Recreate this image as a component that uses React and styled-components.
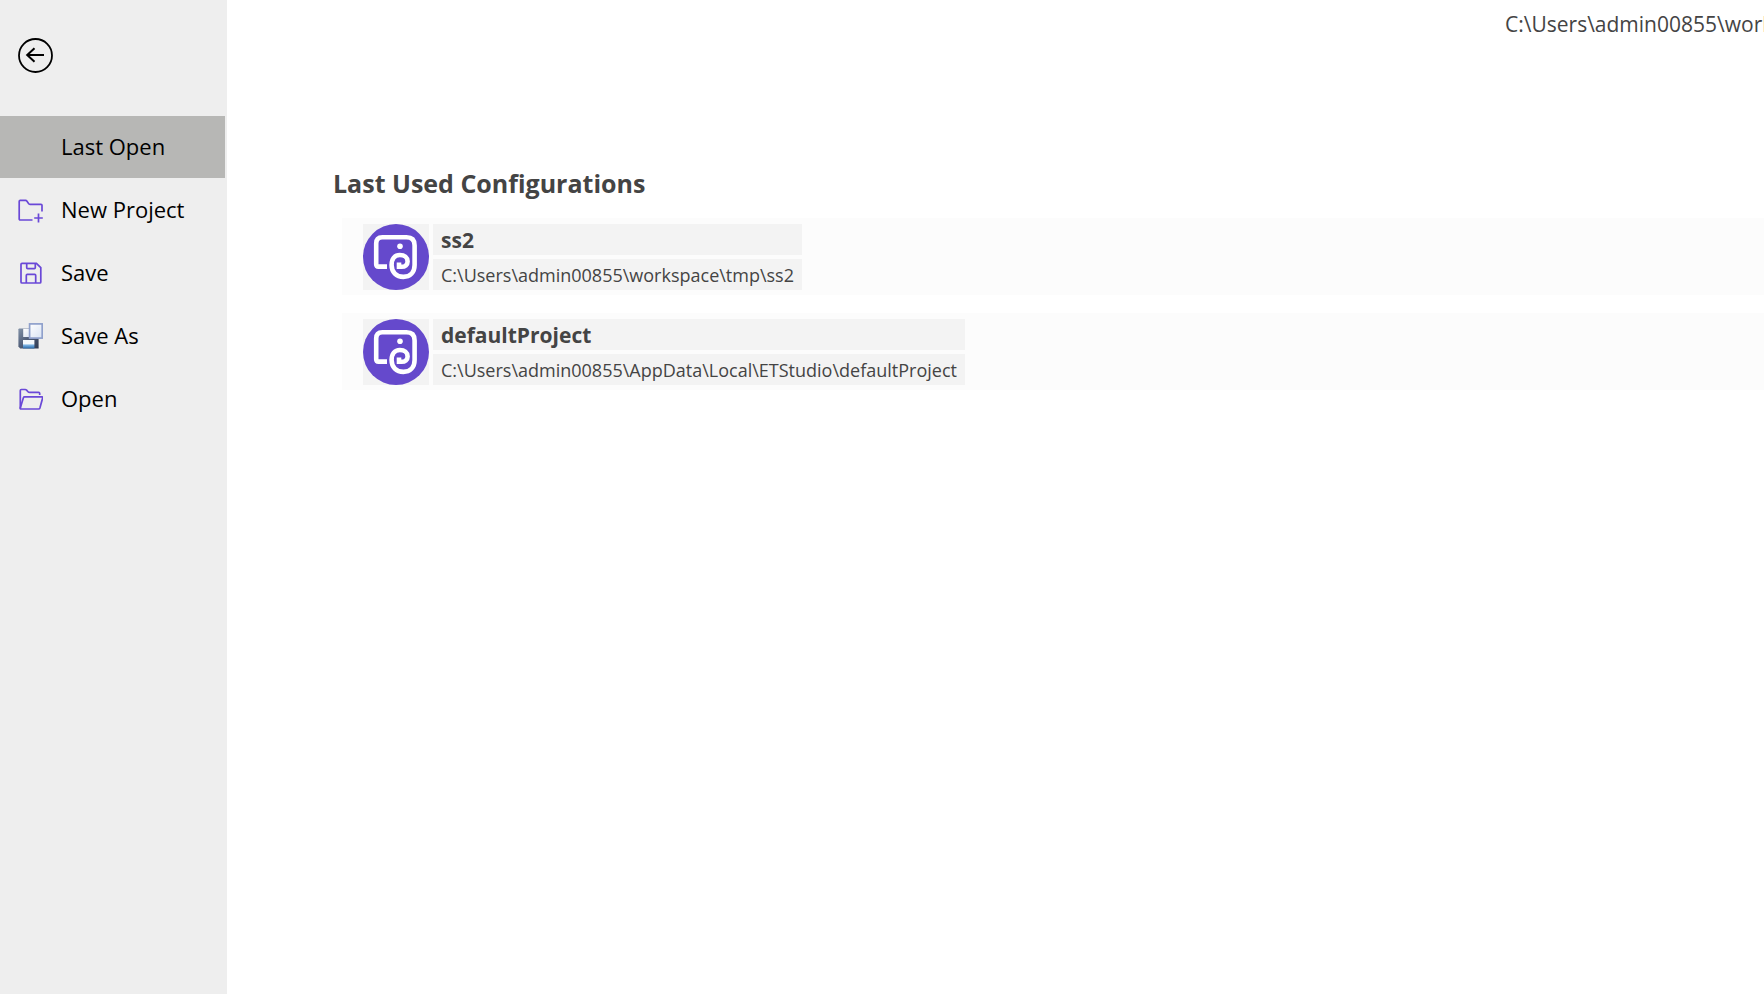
import React, { useState } from "react";

import styled, { createGlobalStyle } from "styled-components";

const menu = [
  { id: "last", label: "Last Open", icon: null },
  { id: "new", label: "New Project", icon: <NewProjectIcon /> },
  { id: "save", label: "Save", icon: <SaveIcon /> },
  { id: "saveAs", label: "Save As", icon: <SaveAsIcon /> },
  { id: "open", label: "Open", icon: <OpenIcon /> },
];

const projects = [
  { name: "ss2", path: "C:\\Users\\admin00855\\workspace\\tmp\\ss2" },
  {
    name: "defaultProject",
    path: "C:\\Users\\admin00855\\AppData\\Local\\ETStudio\\defaultProject",
  },
];

function App() {
  const [active, setActive] = useState("last");

  return (
    <Page>
      <GlobalStyle />
      <Sidebar>
        <BackButton type="button" aria-label="Back">
          <BackIcon />
        </BackButton>
        <Menu>
          {menu.map((item) => (
            <MenuItem
              key={item.id}
              type="button"
              $active={item.id === active}
              onClick={() => setActive(item.id)}
            >
              <IconSlot>{item.icon}</IconSlot>
              <MenuLabel>{item.label}</MenuLabel>
            </MenuItem>
          ))}
        </Menu>
      </Sidebar>
      <Main>
        <CurrentPath>{projects[0].path}</CurrentPath>
        <Title>Last Used Configurations</Title>
        <ProjectList>
          {projects.map((project) => (
            <Project key={project.name}>
              <ProjectButton type="button">
                <LogoBox>
                  <Logo />
                </LogoBox>
                <Labels>
                  <Name>{project.name}</Name>
                  <Path>{project.path}</Path>
                </Labels>
              </ProjectButton>
            </Project>
          ))}
        </ProjectList>
      </Main>
    </Page>
  );
}

export default App;

function BackIcon() {
  return (
    <svg width="35" height="35" viewBox="0 0 35 35" fill="none" stroke="#000">
      <circle cx="17.5" cy="17.5" r="16.5" strokeWidth="1.8" />
      <path d="M26 17H9.5M16.5 10.2L9.2 17l7.3 6.8" strokeWidth="2" />
    </svg>
  );
}

function NewProjectIcon() {
  return (
    <LineIcon viewBox="0 0 26 26">
      <path d="M15.5 23H3.2Q2.2 23 2.2 22V4.4Q2.2 3.4 3.2 3.4H8.6Q9.4 3.4 10 4.2L11.6 6.6Q12 7.3 13 7.3H24Q25 7.3 25 8.3V14.6" />
      <path d="M21.5 16.6V25.4M17.2 21H25.8" />
    </LineIcon>
  );
}

function SaveIcon() {
  return (
    <LineIcon viewBox="0 0 26 26">
      <path d="M5 3.3H19.4L23.8 7.7V22Q23.8 23 22.8 23H5Q4 23 4 22V4.3Q4 3.3 5 3.3Z" />
      <path d="M9.7 3.3V7.6Q9.7 8.6 10.7 8.6H17.3Q18.3 8.6 18.3 7.6V3.3" />
      <path d="M9.3 23V15.4Q9.3 14.4 10.3 14.4H17.7Q18.7 14.4 18.7 15.4V23" />
    </LineIcon>
  );
}

function SaveAsIcon() {
  return (
    <svg width="26" height="26" viewBox="0 0 26 26">
      <defs>
        <linearGradient id="disk" x1="0" y1="0" x2="1" y2="1">
          <stop offset="0" stopColor="#8292a8" />
          <stop offset="0.5" stopColor="#4f5d78" />
          <stop offset="1" stopColor="#2e3950" />
        </linearGradient>
        <linearGradient id="sheet" x1="0" y1="0" x2="1" y2="1">
          <stop offset="0" stopColor="#ffffff" />
          <stop offset="1" stopColor="#d9e3f3" />
        </linearGradient>
        <linearGradient id="label" x1="0" y1="0" x2="0" y2="1">
          <stop offset="0.45" stopColor="#f4f8fc" />
          <stop offset="0.6" stopColor="#7db4e4" />
          <stop offset="1" stopColor="#2767a8" />
        </linearGradient>
      </defs>
      <path d="M2 5.6H21.6V25.4H3.2L1.4 23.6V6.2Z" fill="url(#disk)" />
      <path d="M6.2 5.8H14V14H6.2Z" fill="url(#sheet)" />
      <path d="M6 17H17.4V25.4H6Z" fill="url(#label)" />
      <rect
        x="12.6"
        y="0.9"
        width="12.6"
        height="14.2"
        fill="url(#sheet)"
        stroke="#8fa0cb"
        strokeWidth="1.7"
      />
    </svg>
  );
}

function OpenIcon() {
  return (
    <LineIcon viewBox="0 0 26 26">
      <path d="M3.3 22.4V4.6Q3.3 3.5 4.4 3.5H8.2Q9 3.5 9.6 4.1L11 5.7Q11.6 6.4 12.6 6.4H21.6Q22.7 6.4 22.7 7.5V9" />
      <path d="M7.6 10.8H25Q26 10.8 25.7 11.8L22.9 22Q22.6 23 21.6 23H4Q3 23 3.3 22L6.4 11.7Q6.7 10.8 7.6 10.8Z" />
    </LineIcon>
  );
}

function Logo() {
  return (
    <svg width="66" height="66" viewBox="0 0 66 66" fill="none">
      <circle cx="33" cy="33" r="33" fill="#6549cc" />
      <path
        d="M24 42.6H15.6Q13.2 42.6 13.2 40.2V19.5Q13.2 13.3 19.4 13.3H43.5Q51.6 13.3 51.6 21.4V41C51.6 48.5 47 52.9 40.4 52.9C33.2 52.9 28.6 48 28.6 41C28.6 34.8 31.8 31 36.8 31C41.6 31 44.6 33.6 44.6 37.4C44.6 41 42 42.8 38.6 42.8H36V38.4"
        stroke="#fff"
        strokeWidth="4.6"
      />
      <circle cx="37" cy="22.3" r="2.8" fill="#fff" />
    </svg>
  );
}

const GlobalStyle = createGlobalStyle`
  * {
    box-sizing: border-box;
  }
  body {
    margin: 0;
    background: #fff;
    font-family: "Open Sans", "Noto Sans", sans-serif;
  }
  button {
    border: 0;
    padding: 0;
    background: none;
    font: inherit;
    text-align: left;
    cursor: pointer;
  }
  svg {
    display: block;
    flex-shrink: 0;
  }
`;

const Page = styled.div`
  display: flex;
  min-height: 100vh;
`;

const Sidebar = styled.aside`
  flex: 0 0 227px;
  padding: 38px 2px 0 0;
  background: #eee;
`;

const BackButton = styled.button`
  display: block;
  margin-left: 18px;
  border-radius: 50%;
`;

const Menu = styled.nav`
  display: flex;
  flex-direction: column;
  gap: 1px;
  margin-top: 43px;
`;

const MenuItem = styled.button`
  display: flex;
  align-items: center;
  gap: 18px;
  height: 62px;
  padding-left: 17px;
  color: #000;
  font-size: 22px;
  line-height: 30px;
  white-space: nowrap;
  background: ${(props) => (props.$active ? "#b7b7b5" : "transparent")};
`;

const MenuLabel = styled.span`
  padding-bottom: 3px;
`;

const IconSlot = styled.span`
  width: 26px;
  height: 26px;
`;

const LineIcon = styled.svg`
  width: 26px;
  height: 26px;
  fill: none;
  stroke: #6a48d7;
  stroke-width: 1.7;
`;

const Main = styled.main`
  flex: 1;
  min-width: 0;
  color: #444;
`;

const CurrentPath = styled.div`
  width: 259px;
  height: 48px;
  margin-left: auto;
  font-size: 21px;
  line-height: 48px;
  white-space: nowrap;
  overflow: hidden;
`;

const Title = styled.h1`
  margin: 117px 0 0 106px;
  font-size: 25px;
  line-height: 36px;
`;

const ProjectList = styled.ul`
  display: flex;
  flex-direction: column;
  gap: 18px;
  margin: 17px 0 0 115px;
  padding: 0;
  list-style: none;
`;

const Project = styled.li`
  padding: 6px 0 5px 21px;
  background: #fcfcfc;
`;

const ProjectButton = styled.button`
  display: flex;
  gap: 4px;
  color: inherit;
`;

const LogoBox = styled.span`
  background: #f3f3f3;
`;

const Labels = styled.span`
  display: flex;
  flex-direction: column;
  gap: 4px;
`;

const Label = styled.span`
  height: 31px;
  padding: 0 8px;
  line-height: 33px;
  white-space: nowrap;
  background: #f3f3f3;
`;

const Name = styled(Label)`
  font-size: 21px;
  font-weight: bold;
`;

const Path = styled(Label)`
  font-size: 18px;
`;
